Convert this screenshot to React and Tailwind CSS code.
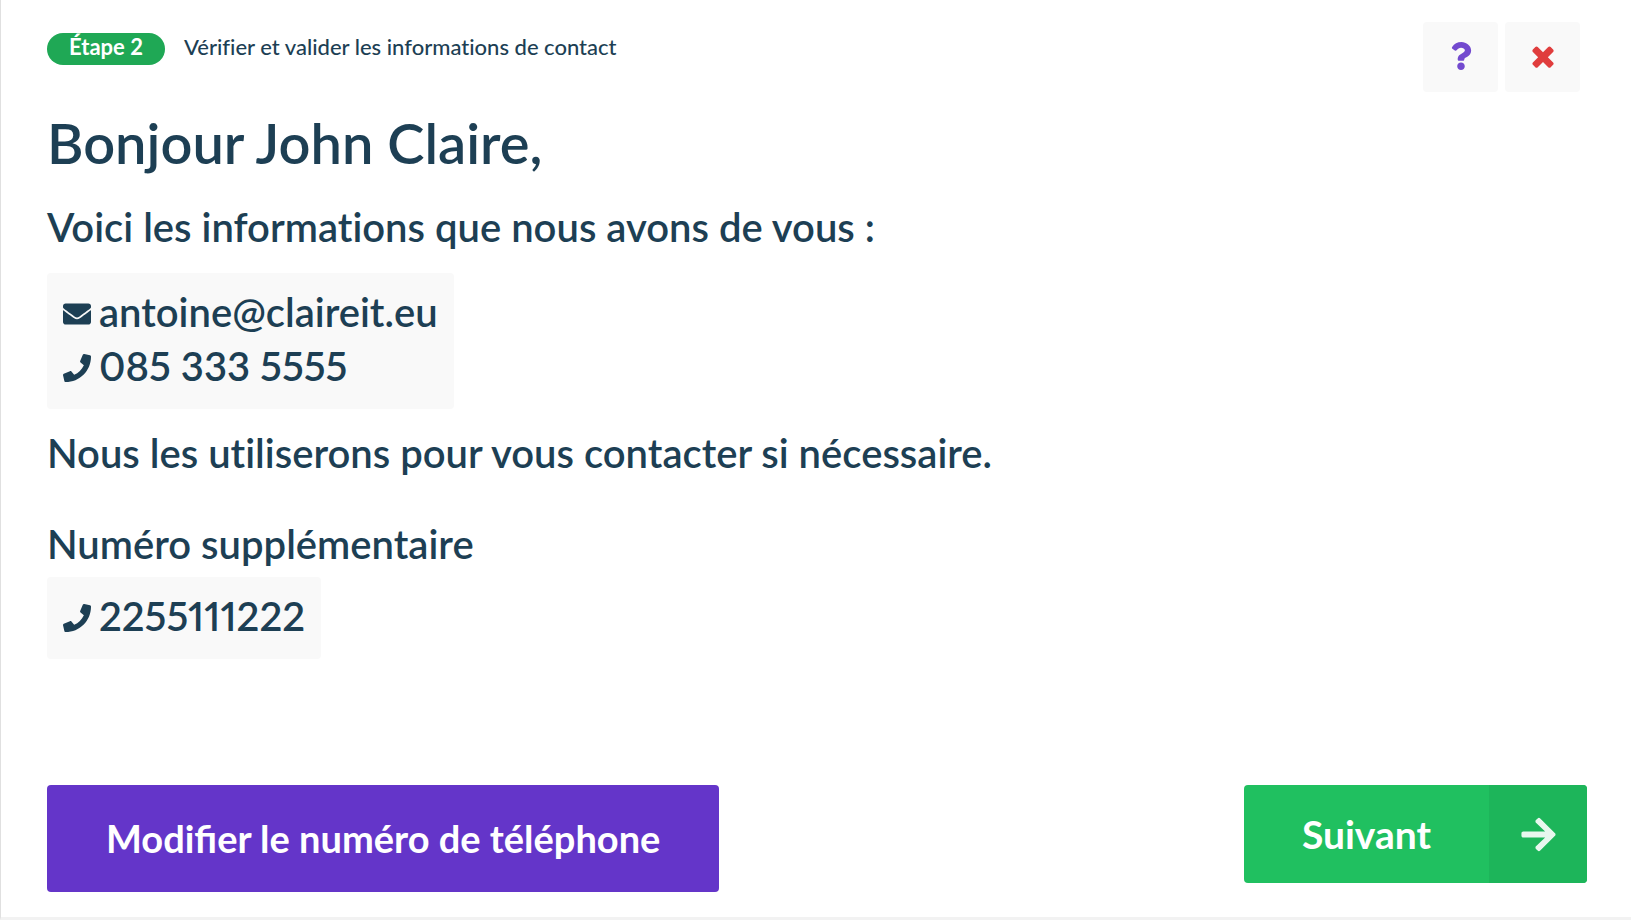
import { FaArrowRight, FaEnvelope, FaPhone, FaQuestion } from 'react-icons/fa';

const CrossIcon = ({ className }) => (
  <svg viewBox="0 0 1792 1792" fill="currentColor" aria-hidden="true" className={className}>
    <path d="M1490 1322q0 40-28 68l-136 136q-28 28-68 28t-68-28l-294-294-294 294q-28 28-68 28t-68-28l-136-136q-28-28-28-68t28-68l294-294-294-294q-28-28-28-68t28-68l136-136q28-28 68-28t68 28l294 294 294-294q28-28 68-28t68 28l136 136q28 28 28 68t-28 68l-294 294 294 294q28 28 28 68z" />
  </svg>
);

const ToolButton = ({ label, children }) => (
  <button
    type="button"
    aria-label={label}
    className="flex h-[70px] w-[75px] items-center justify-center rounded bg-[#f9f9f9] pb-0.5"
  >
    {children}
  </button>
);

const ContactLine = ({ icon: Icon, href, children }) => (
  <a href={href} className="flex items-center gap-2 leading-[54px] proportional-nums">
    <Icon className="mt-1 size-7 shrink-0" />
    {children}
  </a>
);

const App = () => {
  return (
    <main className="flex min-h-screen flex-col border-b-3 border-l border-b-[#f2f2f2] border-l-[#e0e0e0] bg-white font-['Lato',sans-serif] text-[40px] font-semibold text-[#1d3f54]">
      <header className="flex items-start justify-between pt-[22px] pr-[51px] pl-[46px]">
        <div className="flex items-start gap-[19px] pt-[11px] text-[22px] leading-7 [font-variant-ligatures:no-common-ligatures]">
          <span className="h-8 rounded-full bg-[#1fa855] px-[22px] font-bold text-white">Étape 2</span>
          <span className="font-medium">Vérifier et valider les informations de contact</span>
        </div>
        <div className="flex gap-[7px]">
          <ToolButton label="Aide">
            <FaQuestion className="size-7 text-[#734acf]" />
          </ToolButton>
          <ToolButton label="Fermer">
            <CrossIcon className="size-8 text-[#e03d3d]" />
          </ToolButton>
        </div>
      </header>

      <section className="flex flex-1 flex-col items-start px-[46px] pt-5 [font-variant-ligatures:no-common-ligatures]">
        <h1 className="text-[56px] leading-[62px]">Bonjour John Claire,</h1>
        <p className="mt-[26px] leading-[54px]">Voici les informations que nous avons de vous :</p>
        <div className="mt-[19px] rounded bg-[#f9f9f9] px-4 pt-3 pb-4">
          <ContactLine icon={FaEnvelope} href="mailto:antoine@claireit.eu">
            antoine@claireit.eu
          </ContactLine>
          <ContactLine icon={FaPhone} href="tel:0853335555">
            085 333 5555
          </ContactLine>
        </div>
        <p className="mt-[17px] leading-[54px]">Nous les utiliserons pour vous contacter si nécessaire.</p>
        <h2 className="mt-[37px] leading-[54px]">Numéro supplémentaire</h2>
        <div className="mt-1.5 rounded bg-[#f9f9f9] px-4 pt-3 pb-4">
          <ContactLine icon={FaPhone} href="tel:2255111222">
            2255111222
          </ContactLine>
        </div>
      </section>

      <footer className="flex items-start justify-between pr-11 pb-[25px] pl-[46px] font-bold text-white">
        <button type="button" className="h-[107px] rounded bg-[#6435c9] px-[59px] text-[38px]">
          Modifier le numéro de téléphone
        </button>
        <button type="button" className="flex h-[98px] items-stretch overflow-hidden rounded bg-[#20c060] text-[39px]">
          <span className="flex items-center px-[58px]">Suivant</span>
          <span className="flex w-[98px] items-center justify-center bg-[#1db55a]">
            <FaArrowRight className="size-[39px] opacity-90" />
          </span>
        </button>
      </footer>
    </main>
  );
};

export default App;
